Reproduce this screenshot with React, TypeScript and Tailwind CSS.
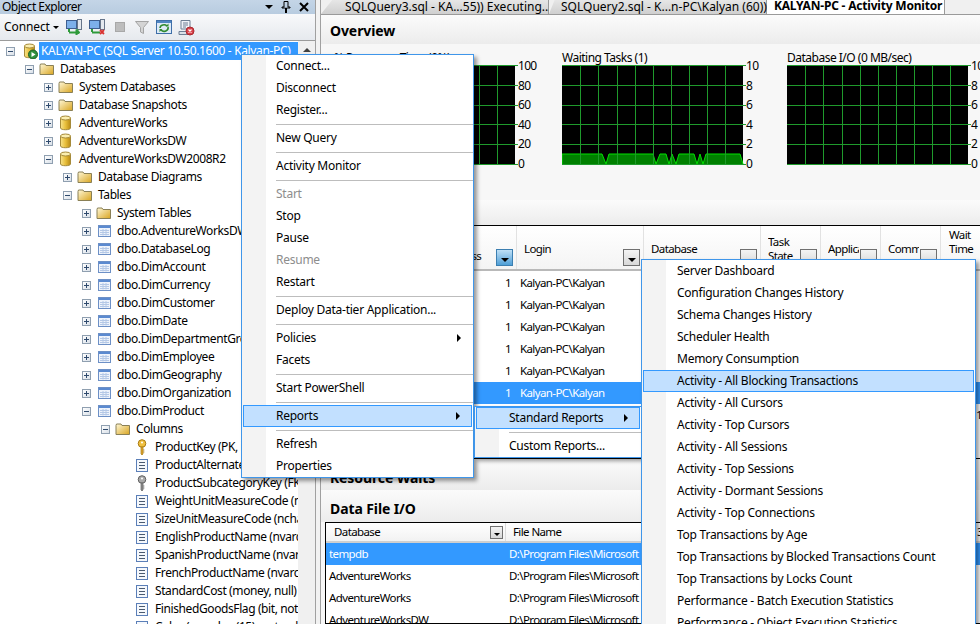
const font = "font-['Noto_Sans',sans-serif]";

type IconKind = "server" | "folder" | "db" | "table" | "key" | "fkey" | "column";

function Expander({ open }: { open: boolean }) {
  return (
    <span className="w-[9px] h-[9px] border border-[#8f9fb0] bg-gradient-to-br from-white to-[#d9e0e8] flex items-center justify-center relative shrink-0">
      <span className="w-[5px] h-px bg-[#2f4a6d]" />
      {!open && <span className="absolute w-px h-[5px] bg-[#2f4a6d]" />}
    </span>
  );
}

function TreeIcon({ kind }: { kind: IconKind }) {
  if (kind === "folder") {
    return (
      <svg width="16" height="14" viewBox="0 0 16 14" className="shrink-0">
        <defs>
          <linearGradient id="fld" x1="0" y1="0" x2="1" y2="1">
            <stop offset="0" stopColor="#fff8d8" />
            <stop offset="1" stopColor="#d9a520" />
          </linearGradient>
        </defs>
        <path d="M1 3.5 L1.5 2 H6 L7 3.5 H14.5 V12.5 H1 Z" fill="url(#fld)" stroke="#8a8056" strokeWidth="1" />
      </svg>
    );
  }
  if (kind === "db" || kind === "server") {
    return (
      <svg width="16" height="16" viewBox="0 0 16 16" className="shrink-0">
        <defs>
          <linearGradient id="cyl" x1="0" y1="0" x2="1" y2="0">
            <stop offset="0" stopColor="#f8e38a" />
            <stop offset="0.5" stopColor="#e8bf3c" />
            <stop offset="1" stopColor="#b98a14" />
          </linearGradient>
        </defs>
        <path d="M2.5 3 V13 C2.5 15.3 12.5 15.3 12.5 13 V3 Z" fill="url(#cyl)" stroke="#a58a3a" />
        <ellipse cx="7.5" cy="3" rx="5" ry="2" fill="#fbeeb0" stroke="#a58a3a" />
        {kind === "server" && (
          <>
            <circle cx="11" cy="11.5" r="4.5" fill="#2f8f3e" stroke="#1c5f28" />
            <path d="M9.5 9 L13.5 11.5 L9.5 14 Z" fill="#ffffff" />
          </>
        )}
      </svg>
    );
  }
  if (kind === "table") {
    return (
      <svg width="13" height="12" viewBox="0 0 13 12" className="shrink-0">
        <rect x="0.5" y="0.5" width="12" height="11" fill="#eef3fb" stroke="#6d90c6" />
        <rect x="1" y="1" width="11" height="2" fill="#5b8ad0" />
        <path d="M2 5.5 H11 M2 7.5 H11 M2 9.5 H11 M5 4 V10.5 M8 4 V10.5" stroke="#b4c8e6" strokeWidth="1" />
      </svg>
    );
  }
  if (kind === "column") {
    return (
      <svg width="12" height="13" viewBox="0 0 12 13" className="shrink-0">
        <rect x="0.5" y="0.5" width="11" height="12" fill="#f5f8fc" stroke="#5b7fb8" />
        <path d="M3 3.5 H9 M3 6.5 H9 M3 9.5 H9" stroke="#4a5a70" strokeWidth="1" />
      </svg>
    );
  }
  const gold = kind === "key";
  return (
    <svg width="10" height="16" viewBox="0 0 10 16" className="shrink-0">
      <circle cx="5" cy="4.5" r="3.8" fill={gold ? "#f0c040" : "#a8a8a8"} stroke={gold ? "#a87a10" : "#606060"} />
      <circle cx="5" cy="3.5" r="1" fill="#ffffff" />
      <path d="M4 8 H6 V15 L5 16 L4 15 Z M6 11 H7.5 M6 13 H7.5" fill={gold ? "#e0a830" : "#909090"} stroke={gold ? "#a87a10" : "#606060"} strokeWidth="0.7" />
    </svg>
  );
}

type Node = { text: string; level: number; icon: IconKind; exp?: "open" | "closed" };

const tree: Node[] = [
  { text: "Databases", level: 1, icon: "folder", exp: "open" },
  { text: "System Databases", level: 2, icon: "folder", exp: "closed" },
  { text: "Database Snapshots", level: 2, icon: "folder", exp: "closed" },
  { text: "AdventureWorks", level: 2, icon: "db", exp: "closed" },
  { text: "AdventureWorksDW", level: 2, icon: "db", exp: "closed" },
  { text: "AdventureWorksDW2008R2", level: 2, icon: "db", exp: "open" },
  { text: "Database Diagrams", level: 3, icon: "folder", exp: "closed" },
  { text: "Tables", level: 3, icon: "folder", exp: "open" },
  { text: "System Tables", level: 4, icon: "folder", exp: "closed" },
  { text: "dbo.AdventureWorksDWBuildVersion", level: 4, icon: "table", exp: "closed" },
  { text: "dbo.DatabaseLog", level: 4, icon: "table", exp: "closed" },
  { text: "dbo.DimAccount", level: 4, icon: "table", exp: "closed" },
  { text: "dbo.DimCurrency", level: 4, icon: "table", exp: "closed" },
  { text: "dbo.DimCustomer", level: 4, icon: "table", exp: "closed" },
  { text: "dbo.DimDate", level: 4, icon: "table", exp: "closed" },
  { text: "dbo.DimDepartmentGroup", level: 4, icon: "table", exp: "closed" },
  { text: "dbo.DimEmployee", level: 4, icon: "table", exp: "closed" },
  { text: "dbo.DimGeography", level: 4, icon: "table", exp: "closed" },
  { text: "dbo.DimOrganization", level: 4, icon: "table", exp: "closed" },
  { text: "dbo.DimProduct", level: 4, icon: "table", exp: "open" },
  { text: "Columns", level: 5, icon: "folder", exp: "open" },
  { text: "ProductKey (PK, int, not null)", level: 6, icon: "key" },
  { text: "ProductAlternateKey (nvarchar(25), null)", level: 6, icon: "column" },
  { text: "ProductSubcategoryKey (FK, int, null)", level: 6, icon: "fkey" },
  { text: "WeightUnitMeasureCode (nchar(3), null)", level: 6, icon: "column" },
  { text: "SizeUnitMeasureCode (nchar(3), null)", level: 6, icon: "column" },
  { text: "EnglishProductName (nvarchar(50), not null)", level: 6, icon: "column" },
  { text: "SpanishProductName (nvarchar(50), not null)", level: 6, icon: "column" },
  { text: "FrenchProductName (nvarchar(50), not null)", level: 6, icon: "column" },
  { text: "StandardCost (money, null)", level: 6, icon: "column" },
  { text: "FinishedGoodsFlag (bit, not null)", level: 6, icon: "column" },
  { text: "Color (nvarchar(15), not null)", level: 6, icon: "column" },
];

const indent = ["pl-[6px]", "pl-[25px]", "pl-[44px]", "pl-[63px]", "pl-[82px]", "pl-[101px]", "pl-[120px]"];

function TreeRow({ node }: { node: Node }) {
  return (
    <div className={`h-[18px] flex items-center whitespace-nowrap ${indent[node.level]}`}>
      <span className="w-[11px] mr-[3px] shrink-0 flex items-center">
        {node.exp && <Expander open={node.exp === "open"} />}
      </span>
      <span className="w-[16px] mr-[5px] shrink-0 flex items-center justify-center">
        <TreeIcon kind={node.icon} />
      </span>
      <span className="tracking-[-0.4px]">{node.text}</span>
    </div>
  );
}

function ToolIcon({ kind }: { kind: "connect" | "disconnect" | "stop" | "filter" | "refresh" | "schema" }) {
  if (kind === "stop") {
    return (
      <svg width="16" height="16" viewBox="0 0 16 16">
        <rect x="3.5" y="3.5" width="9" height="9" fill="#bdbdbd" stroke="#a8a8a8" />
      </svg>
    );
  }
  if (kind === "filter") {
    return (
      <svg width="16" height="16" viewBox="0 0 16 16">
        <path d="M1.5 2.5 H14.5 L9.5 8.5 V14.5 L6.5 13 V8.5 Z" fill="#d4d4d4" stroke="#a4a4a4" />
      </svg>
    );
  }
  if (kind === "refresh") {
    return (
      <svg width="16" height="16" viewBox="0 0 16 16">
        <rect x="0.5" y="1.5" width="15" height="13" fill="#ddeaf8" stroke="#3f6fa8" />
        <rect x="1" y="2" width="14" height="2" fill="#4f86c4" />
        <path d="M4 9 A4 3.5 0 0 1 11 7 M12 8 A4 3.5 0 0 1 5 11" fill="none" stroke="#2f8a2f" strokeWidth="1.6" />
        <path d="M9.5 7.5 H12.5 V4.5 Z M6.5 10 H3.5 V13 Z" fill="#2f8a2f" />
      </svg>
    );
  }
  if (kind === "schema") {
    return (
      <svg width="17" height="17" viewBox="0 0 17 17">
        <path d="M3 1.5 H12 V10 H3 Z" fill="#eef2f7" stroke="#6e7f94" />
        <path d="M1 12.5 H11 L13 15.5 H1 Z" fill="#d9e0e8" stroke="#6e7f94" />
        <path d="M5 4 H10 M5 6 H10 M5 8 H8" stroke="#6e7f94" />
        <circle cx="12" cy="12" r="4" fill="#d9414a" stroke="#a82a30" />
        <path d="M10.5 10.5 L13.5 13.5 M13.5 10.5 L10.5 13.5" stroke="#ffffff" strokeWidth="1.2" />
      </svg>
    );
  }
  return (
    <svg width="17" height="16" viewBox="0 0 17 16">
      <rect x="0.5" y="1.5" width="10" height="8" fill="#7db0ea" stroke="#3f5f8f" />
      <rect x="11.5" y="0.5" width="4" height="10" fill="#e4e8ee" stroke="#66758a" />
      <path d="M3 13.5 H11" stroke="#2f9a3a" strokeWidth="2" />
      <path d="M3 13 V10" stroke="#2f9a3a" strokeWidth="2" />
      {kind === "connect" ? (
        <path d="M10 10.5 L14 13.5 L10 16 Z M12 10 V13" fill="#2f9a3a" stroke="#2f9a3a" />
      ) : (
        <path d="M11 11 L15 15 M15 11 L11 15" stroke="#d9312f" strokeWidth="1.8" />
      )}
    </svg>
  );
}

function ObjectExplorer() {
  return (
    <aside className="w-[316px] shrink-0 h-full flex flex-col border-r border-[#a0a0a0] bg-white">
      <div className="h-[14px] bg-gradient-to-b from-[#c4d5e7] to-[#b8cce0] flex items-end justify-between pl-[2px] pr-[6px] overflow-hidden">
        <span className="leading-[14px] text-black tracking-[-0.5px]">Object Explorer</span>
        <span className="flex items-center gap-[8px] text-black h-[14px]">
          <span className="w-0 h-0 border-x-[4px] border-x-transparent border-t-[4px] border-t-black" />
          <svg width="10" height="12" viewBox="0 0 10 12">
            <path d="M3 0.5 H7 V6 H9 V7 H5.5 V12 H4.5 V7 H1 V6 H3 Z" fill="none" stroke="#000" strokeWidth="1" />
          </svg>
          <svg width="10" height="10" viewBox="0 0 10 10">
            <path d="M1 1 L9 9 M9 1 L1 9" stroke="#000" strokeWidth="2" />
          </svg>
        </span>
      </div>
      <div className="h-[27px] bg-gradient-to-b from-[#f8f9fb] to-[#e6e9ee] border-b border-[#9b9b9b] flex items-center pl-[4px]">
        <span className="tracking-[-0.1px]">Connect</span>
        <span className="ml-[3px] w-0 h-0 border-x-[3px] border-x-transparent border-t-[3px] border-t-black" />
        <span className="ml-[7px] flex items-center gap-[6px]">
          <ToolIcon kind="connect" />
          <ToolIcon kind="disconnect" />
          <ToolIcon kind="stop" />
          <ToolIcon kind="filter" />
          <ToolIcon kind="refresh" />
          <ToolIcon kind="schema" />
        </span>
      </div>
      <div className="flex-1 flex min-h-0">
        <div className="w-[298px] overflow-hidden pt-px">
          <div className="h-[18px] flex items-center whitespace-nowrap pl-[6px]">
            <span className="w-[11px] mr-[3px] shrink-0 flex items-center">
              <Expander open />
            </span>
            <span className="w-[19px] shrink-0 flex items-center justify-center">
              <TreeIcon kind="server" />
            </span>
            <span className="flex-1 self-stretch bg-[#3399ff] text-white pl-[2px] flex items-center overflow-hidden tracking-[-0.35px]">
              KALYAN-PC (SQL Server 10.50.1600 - Kalyan-PC)
            </span>
          </div>
          {tree.map((n) => (
            <TreeRow key={n.text} node={n} />
          ))}
        </div>
        <div className="flex-1 bg-[#f0f0f0] flex justify-center pt-[7px]">
          <span className="w-0 h-0 border-x-[4px] border-x-transparent border-b-[4px] border-b-[#404040]" />
        </div>
      </div>
    </aside>
  );
}

function DocTabs() {
  return (
    <div className="h-[15px] flex items-end bg-[#f0f0f0] border-b border-[#9a9a9a] whitespace-nowrap overflow-hidden">
      <div className="w-[228px] h-[15px] pl-[24px] bg-gradient-to-b from-[#e8e8e8] to-[#cfcfcf] leading-[15px] border-r border-[#9a9a9a] [clip-path:polygon(12px_0,100%_0,100%_100%,0_100%)]">
        SQLQuery3.sql - KA...55)) Executing...*
      </div>
      <div className="w-[218px] h-[15px] pl-[12px] bg-gradient-to-b from-[#e8e8e8] to-[#cfcfcf] leading-[15px] border-r border-[#9a9a9a] [clip-path:polygon(6px_0,100%_0,100%_100%,0_100%)]">
        SQLQuery2.sql - K...n-PC\Kalyan (60))*
      </div>
      <div className="w-[178px] h-[16px] pl-[7px] bg-white leading-[16px] font-bold border-r border-[#9a9a9a] tracking-[-0.2px]">
        KALYAN-PC - Activity Monitor
      </div>
    </div>
  );
}

function SectionBar({ title, className }: { title: string; className: string }) {
  return (
    <div className={`bg-gradient-to-b from-[#fbfbfb] to-[#ececec] pl-[9px] flex items-center font-bold text-[14px] tracking-[-0.1px] ${className}`}>
      {title}
    </div>
  );
}

function Chart({ title, labels, data, className }: { title: string; labels: number[]; data?: string; className: string }) {
  const hLines = [0, 20, 40, 59, 79, 99];
  const vLines = [18, 36, 55, 73, 91, 109, 127, 145, 163];
  return (
    <div className={`shrink-0 ${className}`}>
      <div className="h-[14px] leading-[14px] tracking-[-0.5px] whitespace-nowrap">{title}</div>
      <div className="flex">
        <svg width="184" height="100" viewBox="0 0 184 100" className="shrink-0">
          <rect width="181" height="100" fill="#000000" />
          {data && <path d={data} fill="#008000" stroke="#00e000" strokeWidth="1" />}
          {hLines.map((y) => (
            <line key={y} x1="0" x2="184" y1={y + 0.5} y2={y + 0.5} stroke="#1f9a2c" />
          ))}
          {vLines.map((x) => (
            <line key={x} x1={x + 0.5} x2={x + 0.5} y1="0" y2="100" stroke="#1f9a2c" />
          ))}
        </svg>
        <div className="h-[110px] -mt-[5px] flex flex-col justify-between leading-[12px] tracking-[-0.7px]">
          {labels.map((l) => (
            <span key={l} className="block">
              {l}
            </span>
          ))}
        </div>
      </div>
    </div>
  );
}

function FilterBtn({ active, dark }: { active?: boolean; dark?: boolean }) {
  return (
    <span
      className={`w-[17px] h-[17px] border flex items-end justify-center pb-[3px] shrink-0 ${
        active ? "bg-gradient-to-b from-[#bfe0f6] to-[#4d9fd6] border-[#3c7fb1]" : "bg-gradient-to-b from-[#f4f4f4] to-[#d8d8d8] border-[#707070]"
      }`}
    >
      {dark && <span className="w-0 h-0 border-x-[4px] border-x-transparent border-t-[4px] border-t-black" />}
    </span>
  );
}

const processCols: { label: string; w: string; active?: boolean; dark?: boolean }[] = [
  { label: "User\nProcess", w: "w-[80px]", active: true },
  { label: "Login", w: "w-[127px]", dark: true },
  { label: "Database", w: "w-[117px]" },
  { label: "Task\nState", w: "w-[60px]" },
  { label: "Application", w: "w-[60px]" },
  { label: "Command", w: "w-[60px]" },
];

function ProcessGrid() {
  const rows = [false, false, false, false, false, true, false];
  return (
    <div className="h-[234px] border-t border-b border-black bg-white overflow-hidden text-[11.5px] tracking-[-0.6px]">
      <div className="h-[45px] flex pl-[116px] border-b-2 border-[#b9b9b9] bg-gradient-to-b from-white to-[#f4f4f4]">
        {processCols.map((c) => (
          <div key={c.label} className={`${c.w} shrink-0 border-r border-[#e2e2e2] flex items-center pl-[7px] pr-[3px] justify-between gap-[1px]`}>
            <span className="flex-1 overflow-hidden leading-[14px] whitespace-pre-line pt-[3px]">{c.label}</span>
            <span className="self-end mb-[3px]">
              <FilterBtn active={c.active} dark={c.dark || c.active} />
            </span>
          </div>
        ))}
        <div className="w-[40px] pl-[8px] pt-[3px] leading-[14px] flex items-center">Wait Time (ms)</div>
      </div>
      <div className="pt-px">
        {rows.map((sel, i) => (
          <div key={i} className={`h-[22px] flex items-center ${sel ? "bg-[#3399ff] text-white" : ""}`}>
            <span className="w-[190px] shrink-0 text-right">1</span>
            <span className="pl-[9px] w-[465px] shrink-0">Kalyan-PC\Kalyan</span>
            <span>{i === 6 ? "1" : ""}</span>
          </div>
        ))}
      </div>
    </div>
  );
}

function DataFileGrid() {
  const rows = ["tempdb", "AdventureWorks", "AdventureWorks", "AdventureWorksDW"];
  return (
    <div className="ml-[4px] border border-black border-r-0 bg-white flex-1 overflow-hidden text-[11.5px] tracking-[-0.6px]">
      <div className="h-[20px] flex border-b-2 border-[#cfcfcf] bg-gradient-to-b from-white to-[#f2f2f2]">
        <div className="w-[180px] shrink-0 border-r border-[#dcdcdc] flex items-center justify-between pl-[8px] pr-[2px]">
          <span>Database</span>
          <span className="w-[13px] h-[13px] border border-[#707070] bg-gradient-to-b from-[#f4f4f4] to-[#d8d8d8] flex items-end justify-center pb-[2px]">
            <span className="w-0 h-0 border-x-[3px] border-x-transparent border-t-[3px] border-t-black" />
          </span>
        </div>
        <div className="pl-[7px] w-[471px] shrink-0 flex items-center">File Name</div>
        <div className="flex items-center">3</div>
      </div>
      {rows.map((r, i) => (
        <div key={i} className={`h-[22px] flex items-center ${i === 0 ? "bg-[#3399ff] text-white" : ""}`}>
          <span className="w-[183px] pl-[3px] shrink-0">{r}</span>
          <span className="whitespace-nowrap">D:\Program Files\Microsoft SQL Server\MSSQL10_50</span>
        </div>
      ))}
    </div>
  );
}

function ActivityMonitor() {
  const waiting =
    "M0 100 V89 H40 L44 99 L47 89 H91 L94 99 L98 89 H104 L107 99 L110 89 L114 99 L117 89 H132 L135 99 L138 89 L141 99 L144 89 H178 L181 99 V100 Z";
  const io = "M0 99.5 H181";
  return (
    <main className="flex-1 min-w-0 h-full ml-[4px] border-l border-[#a0a0a0] bg-[#f7f7f7] flex flex-col overflow-hidden">
      <DocTabs />
      <SectionBar title="Overview" className="h-[29px] pt-[1px]" />
      <div className="h-[156px] pl-[13px] pt-[7px] flex">
        <Chart title="% Processor Time (0%)" labels={[100, 80, 60, 40, 20, 0]} data={io} className="w-[228px]" />
        <Chart title="Waiting Tasks (1)" labels={[10, 8, 6, 4, 2, 0]} data={waiting} className="w-[225px]" />
        <Chart title="Database I/O (0 MB/sec)" labels={[10, 8, 6, 4, 2, 0]} data={io} className="w-[225px]" />
      </div>
      <SectionBar title="Processes" className="h-[25px]" />
      <ProcessGrid />
      <SectionBar title="Resource Waits" className="h-[31px] pt-[5px]" />
      <SectionBar title="Data File I/O" className="h-[32px] pt-[4px]" />
      <div className="flex-1 flex min-h-0">
        <DataFileGrid />
      </div>
    </main>
  );
}

type MenuItem = { t: string; gray?: boolean; sub?: boolean; hi?: boolean } | "sep";

const serverMenu: MenuItem[] = [
  { t: "Connect..." },
  { t: "Disconnect" },
  { t: "Register..." },
  "sep",
  { t: "New Query" },
  "sep",
  { t: "Activity Monitor" },
  "sep",
  { t: "Start", gray: true },
  { t: "Stop" },
  { t: "Pause" },
  { t: "Resume", gray: true },
  { t: "Restart" },
  "sep",
  { t: "Deploy Data-tier Application..." },
  "sep",
  { t: "Policies", sub: true },
  { t: "Facets" },
  "sep",
  { t: "Start PowerShell" },
  "sep",
  { t: "Reports", sub: true, hi: true },
  "sep",
  { t: "Refresh" },
  { t: "Properties" },
];

const reportsMenu: MenuItem[] = [{ t: "Standard Reports", sub: true, hi: true }, "sep", { t: "Custom Reports..." }];

const standardMenu: MenuItem[] = [
  { t: "Server Dashboard" },
  { t: "Configuration Changes History" },
  { t: "Schema Changes History" },
  { t: "Scheduler Health" },
  { t: "Memory Consumption" },
  { t: "Activity - All Blocking Transactions", hi: true },
  { t: "Activity - All Cursors" },
  { t: "Activity - Top Cursors" },
  { t: "Activity - All Sessions" },
  { t: "Activity - Top Sessions" },
  { t: "Activity - Dormant Sessions" },
  { t: "Activity - Top Connections" },
  { t: "Top Transactions by Age" },
  { t: "Top Transactions by Blocked Transactions Count" },
  { t: "Top Transactions by Locks Count" },
  { t: "Performance - Batch Execution Statistics" },
  { t: "Performance - Object Execution Statistics" },
];

function Menu({ items, className, stripe, textPad, hiPad }: { items: MenuItem[]; className: string; stripe: string; textPad: string; hiPad: string }) {
  return (
    <div className={`absolute bg-white border border-[#3f96ea] shadow-[3px_3px_4px_rgba(0,0,0,0.4)] tracking-[-0.25px] ${className}`}>
      <div className={`absolute left-0 top-0 bottom-0 bg-[#f3f3f3] ${stripe}`} />
      <div className="relative">
        {items.map((it, i) =>
          it === "sep" ? (
            <div key={i} className={`h-[6px] flex items-center ${textPad}`}>
              <div className="h-px flex-1 bg-[#bdbdbd]" />
            </div>
          ) : (
            <div
              key={i}
              className={`h-[22px] flex items-center justify-between ${
                it.hi
                  ? `mx-[1px] pr-[11px] bg-[#c2e0ff] border border-[#3399ff] ${hiPad}`
                  : `pr-[12px] ${textPad}`
              } ${it.gray ? "text-[#8d8d8d]" : "text-black"}`}
            >
              <span className="whitespace-nowrap">{it.t}</span>
              {it.sub && <span className="w-0 h-0 border-y-[4px] border-y-transparent border-l-[4px] border-l-black" />}
            </div>
          )
        )}
      </div>
    </div>
  );
}

export default function App() {
  return (
    <div className={`relative w-[980px] h-[624px] overflow-hidden flex bg-[#f2f2f2] text-[12px] text-black ${font}`}>
      <ObjectExplorer />
      <ActivityMonitor />
      <Menu items={serverMenu} className="left-[241px] top-[54px] w-[233px]" stripe="w-[24px]" textPad="pl-[34px]" hiPad="pl-[32px]" />
      <Menu items={reportsMenu} className="left-[474px] top-[406px] w-[168px]" stripe="w-[24px]" textPad="pl-[34px]" hiPad="pl-[32px]" />
      <Menu items={standardMenu} className="left-[641px] top-[259px] w-[335px] pb-[20px]" stripe="w-[24px]" textPad="pl-[35px]" hiPad="pl-[33px]" />
    </div>
  );
}
